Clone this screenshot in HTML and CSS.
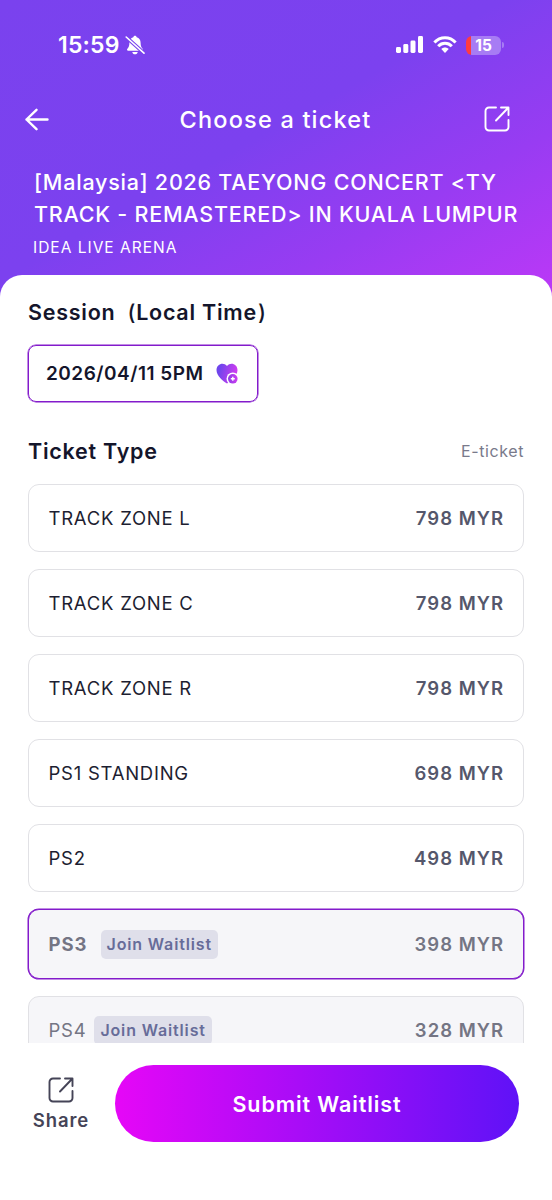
FILE: index.html
```html
<!DOCTYPE html>
<html lang="en">
<head>
<meta charset="utf-8">
<meta name="viewport" content="width=device-width, initial-scale=1">
<title>Choose a ticket</title>
<link rel="stylesheet" href="styles.css">
</head>
<body>
<div class="app">
  <header class="hero">
    <div class="status">
      <span class="clock">15:59</span>
      <svg class="bell" width="20" height="20" viewBox="0 0 20 20"><path fill="#fff" d="M10 .8c.9 0 1.6.6 1.7 1.5 2.500.7 3.900 2.800 3.900 5.500 0 3.600.8 4.700 2 5.900.8.9.4 2-.8 2H3.200c-1.200 0-1.600-1.100-.8-2 1.200-1.200 2-2.300 2-5.900 0-2.700 1.400-4.800 3.900-5.500C8.400 1.400 9.100.8 10 .8zM7.300 16.900h5.400c-.2 1.500-1.300 2.400-2.700 2.400s-2.500-.9-2.700-2.400z"/><path stroke="#7a42ef" stroke-width="3.600" d="M0 1l20 18"/><path stroke="#fff" stroke-width="1.600" stroke-linecap="round" d="M1.200 2l17.800 16.200"/></svg>
      <span class="status-icons">
        <svg width="28" height="18" viewBox="0 0 28 18" fill="#fff"><rect x="0" y="11" width="5" height="6" rx="1.400"/><rect x="7.300" y="8" width="5" height="9" rx="1.400"/><rect x="14.500" y="4.500" width="5" height="12.500" rx="1.400"/><rect x="22" y="0" width="5" height="17" rx="1.400"/></svg>
        <svg width="24" height="18" viewBox="0 0 24 18" fill="none" stroke="#fff" stroke-width="3"><path d="M1.400 6.500C7.200.2 16.800.2 22.600 6.500"/><path d="M5.200 10.300C9 6.300 15 6.300 18.800 10.300"/><path fill="#fff" stroke="none" d="M8.300 13c2.200-2 5.200-2 7.400 0L12 17z"/></svg>
        <span class="battery"><span class="level">15</span><i class="cap"></i></span>
      </span>
    </div>
    <nav class="nav">
      <svg class="back" width="24" height="24" viewBox="0 0 24 24" fill="none" stroke="#fff" stroke-width="2.400" stroke-linecap="round" stroke-linejoin="round"><path d="M22.500 12.500H1.500M11.500 2.800L1.500 12.500l10 9.700"/></svg>
      <h1 class="nav-title">Choose a ticket</h1>
      <svg class="share-icon" width="26" height="26" viewBox="0 0 26 26" fill="none" stroke="#fff" stroke-width="1.900" stroke-linecap="round" stroke-linejoin="round"><path d="M12 1.500H5A3.500 3.500 0 0 0 1.500 5v16A3.500 3.500 0 0 0 5 24.500h16a3.500 3.500 0 0 0 3.500-3.500v-7M17 1.500h7.500V9M24 2L12 14.500"/></svg>
    </nav>
    <div class="event">
      <h2 class="event-name">[Malaysia] 2026 TAEYONG CONCERT &lt;TY<br>TRACK - REMASTERED&gt; IN KUALA LUMPUR</h2>
      <p class="venue">IDEA LIVE ARENA</p>
    </div>
  </header>
  <main class="sheet">
    <h3 class="heading session-heading">Session<span class="paren-open">(</span>Local Time<span class="paren-close">)</span></h3>
    <button class="session"><span>2026/04/11 5PM</span>
      <svg width="23" height="22" viewBox="0 0 23 22"><defs><linearGradient id="heart" x1="0" y1="0" x2="1" y2=".25"><stop offset=".2" stop-color="#6f45ec"/><stop offset="1" stop-color="#cf3df0"/></linearGradient><linearGradient id="plus" x1="0" y1="0" x2="1" y2="0"><stop stop-color="#8d3ce8"/><stop offset="1" stop-color="#cf3df0"/></linearGradient></defs><path fill="url(#heart)" d="M11 20.500C7 18 .5 13 .5 7c0-6 7-8.500 10.500-4C14.500-1.500 21.500 1 21.500 7c0 6-6.500 11-10.500 13.500z"/><circle cx="16.800" cy="15.800" r="6.300" fill="#fff"/><circle cx="16.800" cy="15.800" r="4.800" fill="url(#plus)"/><path stroke="#fff" stroke-width="1.400" d="M16.800 13.800v4M14.800 15.800h4"/></svg>
    </button>
    <div class="type-head"><h3 class="heading">Ticket Type</h3><span class="delivery">E-ticket</span></div>
    <ul class="tickets">
      <li class="ticket"><span class="name">TRACK ZONE L</span><span class="price">798 MYR</span></li>
      <li class="ticket"><span class="name">TRACK ZONE C</span><span class="price">798 MYR</span></li>
      <li class="ticket"><span class="name">TRACK ZONE R</span><span class="price">798 MYR</span></li>
      <li class="ticket"><span class="name">PS1 STANDING</span><span class="price">698 MYR</span></li>
      <li class="ticket"><span class="name">PS2</span><span class="price">498 MYR</span></li>
      <li class="ticket sold selected"><span class="name">PS3</span><span class="badge">Join Waitlist</span><span class="price">398 MYR</span></li>
      <li class="ticket sold"><span class="name">PS4</span><span class="badge">Join Waitlist</span><span class="price">328 MYR</span></li>
    </ul>
  </main>
  <footer class="bar">
    <div class="share">
      <svg width="26" height="26" viewBox="0 0 26 26" fill="none" stroke="#454457" stroke-width="1.900" stroke-linecap="round" stroke-linejoin="round"><path d="M12 1.500H5A3.500 3.500 0 0 0 1.500 5v16A3.500 3.500 0 0 0 5 24.500h16a3.500 3.500 0 0 0 3.500-3.500v-7M17 1.500h7.500V9M24 2L12 14.500"/></svg>
      <span>Share</span>
    </div>
    <button class="submit">Submit Waitlist</button>
  </footer>
</div>
</body>
</html>
```
FILE: styles.css
```css
* { box-sizing: border-box; margin: 0; padding: 0; }
body { font-family: Inter, sans-serif; background: #fff; color: #14152b; }
button { font: inherit; border: 0; background: none; }
svg { display: block; flex: none; }
.app { height: 1200px; display: flex; flex-direction: column; overflow: hidden; }

.hero { flex: none; height: 302px; color: #fff; background: linear-gradient(151deg, #7a42ee 0%, #7c41ef 46%, #983cf2 72%, #bd38f7 100%); }
.status { height: 90px; display: flex; align-items: center; padding: 0 48px 0 58px; }
.clock { font-size: 23px; font-weight: 600; letter-spacing: .2px; }
.bell { margin-left: 5px; }
.status-icons { margin-left: auto; display: flex; align-items: center; gap: 9px; }
.battery { display: flex; align-items: center; gap: 1px; }
.level { width: 35px; height: 19px; border-radius: 6px; background: linear-gradient(90deg, #ff3b41 5.500px, #a77cf4 5.500px); font-size: 15.500px; line-height: 19px; font-weight: 700; text-align: center; }
.cap { width: 2px; height: 6px; border-radius: 0 2px 2px 0; background: #a77cf4; }
.nav { height: 58px; display: flex; align-items: center; justify-content: space-between; padding: 0 42px 0 25px; }
.nav-title { font-size: 23.500px; line-height: 30px; font-weight: 550; letter-spacing: 1.200px; margin-left: 18px; padding-top: 1px; }
.event { padding: 18px 0 0 34px; white-space: nowrap; }
.event-name { font-size: 21.500px; line-height: 32px; font-weight: 500; letter-spacing: .77px; }
.venue { font-size: 15.500px; line-height: 22px; margin: 7px 0 0 -1px; letter-spacing: 1px; }

.sheet { flex: 1; min-height: 0; overflow: hidden; margin-top: -27px; padding: 21px 28px 0; border-radius: 22px 22px 0 0; background: #fff; }
.heading { font-size: 21.500px; line-height: 32px; font-weight: 580; letter-spacing: .75px; }
.paren-open { margin-left: 12px; }
.paren-open, .paren-close { font-weight: 450; }
.paren-close { margin-left: 1px; }
.session { margin-top: 17px; width: 230px; height: 57px; border: 1px solid #831bcb; box-shadow: 0 0 0 .5px #831bcb; border-radius: 8px; display: flex; align-items: center; padding-left: 17px; gap: 12px; font-size: 19px; font-weight: 600; letter-spacing: .5px; color: #14152b; white-space: nowrap; }
.type-head { margin-top: 33px; height: 32px; display: flex; align-items: center; justify-content: space-between; }
.delivery { font-size: 16px; color: #797a8b; letter-spacing: .6px; }
.tickets { list-style: none; margin-top: 17px; display: flex; flex-direction: column; gap: 17px; }
.ticket { flex: none; height: 68px; border: 1px solid #e1e1e5; border-radius: 11px; display: flex; align-items: center; padding: 0 19px 0 19.500px; font-size: 18.500px; letter-spacing: .75px; color: #1d1e31; }
.price { margin-left: auto; font-weight: 570; color: #55576b; letter-spacing: 1px; }
.badge { margin-left: 8px; height: 29px; padding: 0 6px; border-radius: 5px; background: #dfdfea; color: #676c99; font-size: 16px; line-height: 29px; font-weight: 600; letter-spacing: .85px; }
.sold { background: #f6f6f9; }
.sold .name, .sold .price { color: #747584; }
.selected { height: 70px; border-color: #831bcb; box-shadow: 0 0 0 .5px #831bcb; }
.selected .name { font-weight: 650; letter-spacing: 1px; }
.selected .badge { margin-left: 13px; }

.bar { flex: none; height: 157px; display: flex; align-items: flex-start; padding: 22px 33px 0; background: #fff; }
.share { width: 56px; padding-top: 12px; display: flex; flex-direction: column; align-items: center; gap: 5px; font-size: 18.500px; line-height: 24px; font-weight: 570; letter-spacing: .9px; color: #454457; }
.submit { margin-left: 26px; width: 404px; height: 77px; border-radius: 39px; background: linear-gradient(90deg, #e607f7, #5f12f7); color: #fff; font-size: 21.500px; font-weight: 570; letter-spacing: .9px; }
```
